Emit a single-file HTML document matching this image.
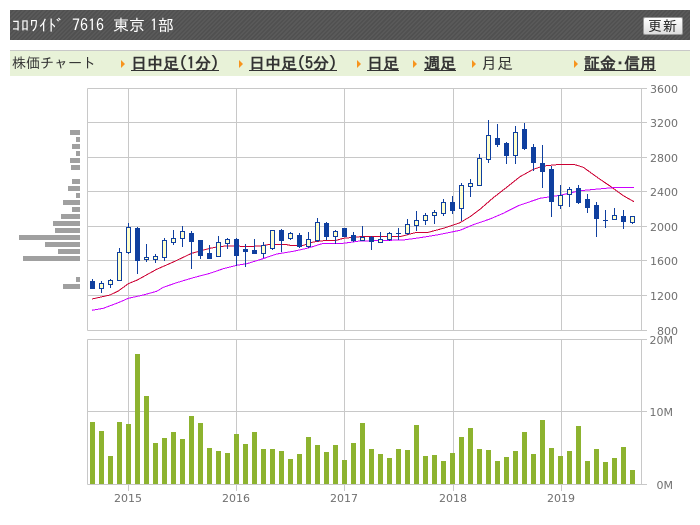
<!DOCTYPE html>
<html lang="ja"><head><meta charset="utf-8"><title>Chart</title>
<style>
html,body{margin:0;padding:0;background:#fff;width:700px;height:525px;overflow:hidden}
#wrap{position:relative;width:700px;height:525px;font-family:"IPAGothic","Liberation Sans","Noto Sans CJK JP",sans-serif}
#head{position:absolute;left:10px;top:10px;width:680px;height:30px;background:repeating-linear-gradient(135deg,#5a5a5a 0,#5a5a5a 1.5px,#505050 1.5px,#505050 3px)}
.t{position:absolute;white-space:pre;line-height:16px}
#head .t{color:#fff;font-size:16px;top:7px}
#btn{position:absolute;left:633px;top:7px;width:38px;height:16px;border:1px solid #999;border-radius:2px;background:linear-gradient(#fff,#ddd);color:#222;font-size:14px;line-height:16px;text-align:center;letter-spacing:1px}
#nav{position:absolute;left:10px;top:50px;width:680px;height:25px;border-top:1px solid #c8c8c8;background:#e8f2d8}
#nav .t{top:4px;color:#333;font-size:16px}
#nav a{color:#333;font-weight:bold;text-decoration:underline}
.ar{position:absolute;top:9px;width:0;height:0;border-left:4px solid #f7941d;border-top:4px solid transparent;border-bottom:4px solid transparent}
svg{position:absolute;left:0;top:0}
svg text{font-family:"DejaVu Sans",sans-serif;font-size:11px;fill:#707070}
</style></head><body><div id="wrap">
<div id="head">
<span class="t" style="left:2px;letter-spacing:1px">ｺﾛﾜｲﾄﾞ</span>
<span class="t" style="left:62px">7616</span>
<span class="t" style="left:103px">東京</span>
<span class="t" style="left:140px">1部</span>
<div id="btn">更新</div>
</div>
<div id="nav">
<span class="t" style="left:2px;font-size:14px">株価チャート</span>
<i class="ar" style="left:111px"></i><span class="t" style="left:121px"><a>日中足(1分)</a></span>
<i class="ar" style="left:229px"></i><span class="t" style="left:239px"><a>日中足(5分)</a></span>
<i class="ar" style="left:347px"></i><span class="t" style="left:357px"><a>日足</a></span>
<i class="ar" style="left:403px"></i><span class="t" style="left:414px"><a>週足</a></span>
<i class="ar" style="left:462px"></i><span class="t" style="left:471px">月足</span>
<i class="ar" style="left:564px"></i><span class="t" style="left:574px"><a>証金･信用</a></span>
</div>
<svg width="700" height="525" viewBox="0 0 700 525">
<g fill="#a0a0a0">
<rect x="70" y="130" width="10" height="5"/><rect x="76" y="137" width="4" height="5"/><rect x="72" y="144" width="8" height="5"/><rect x="76" y="151" width="4" height="5"/><rect x="70" y="158" width="10" height="5"/><rect x="71" y="165" width="9" height="5"/><rect x="72" y="179" width="8" height="5"/><rect x="68" y="186" width="12" height="5"/><rect x="76" y="193" width="4" height="5"/><rect x="63" y="200" width="17" height="5"/><rect x="72" y="207" width="8" height="5"/><rect x="61" y="214" width="19" height="5"/><rect x="53" y="221" width="27" height="5"/><rect x="55" y="228" width="25" height="5"/><rect x="19" y="235" width="61" height="5"/><rect x="45" y="242" width="35" height="5"/><rect x="58" y="249" width="22" height="5"/><rect x="23" y="256" width="57" height="5"/><rect x="76" y="277" width="4" height="5"/><rect x="63" y="284" width="17" height="5"/>
</g>
<path fill="none" stroke="#c8c8c8" stroke-width="1" shape-rendering="crispEdges" d="M87.5 88.5H647M87.5 122.5H647M87.5 157.5H647M87.5 191.5H647M87.5 226.5H647M87.5 260.5H647M87.5 295.5H647M87.5 330.5H647M87.5 88.5V330.5M128.5 88.5V330.5M236.5 88.5V330.5M344.5 88.5V330.5M453.5 88.5V330.5M561.5 88.5V330.5M641.5 88.5V330.5M87.5 339.5H647M87.5 411.5H647M87.5 484.5H647M87.5 339.5V484.5M128.5 339.5V491M236.5 339.5V491M344.5 339.5V491M453.5 339.5V491M561.5 339.5V491M641.5 339.5V484.5"/>
<polyline fill="none" stroke="#cc0033" stroke-width="1" shape-rendering="crispEdges" points="92,299 110,295 118.3,291 128.3,283.7 137.3,280 156.7,269.3 173.3,262 191.7,253.3 210,248.3 218.3,246.7 226.7,246 236.7,246 245.3,246.7 260,246 270,244.3 285,244.3 290,245.3 303.3,245.3 313.3,242 323.3,240.7 335,240.7 343.3,238.3 360,236.7 400,236.7 410,234 416.7,232.3 428.3,232.3 443.3,228.3 460,222.7 470,216.7 480,209.3 493.3,197.7 506.7,187.3 520,176.7 533.3,169.3 543.3,166 556.7,164.7 575,164.7 583.3,167.3 600,179.3 610,186 623.3,195.7 634,201.7"/>
<polyline fill="none" stroke="#cc00ff" stroke-width="1" shape-rendering="crispEdges" points="92,310.3 103.3,308.3 118.3,302.7 128.3,298.3 143.3,295 156.7,291.3 163.3,287.3 176.7,282.7 193.3,277.7 210,273.3 223.3,268.7 236.7,265.3 246.7,263.7 260,259.7 276.7,254 293.3,251.3 308.3,248 323.3,243.3 343.3,243.3 360,241 403.3,240 420,237.7 436.7,235 460,230.3 473.3,224.7 490,219 503.3,213.3 518.3,205.7 540,198.3 560,195.3 580,190.7 601.7,188.7 616.7,187.3 634,187.3"/>
<path fill="none" stroke="#0f3f9f" stroke-width="1" shape-rendering="crispEdges" d="M92.5 279V289M101.5 281V293M110.5 279V288M119.5 248V281M128.5 223V254M137.5 227V274M146.5 244V262M155.5 254V263M164.5 238V261M173.5 230V245M182.5 226V247M191.5 231V269M200.5 240V259M209.5 245V259M218.5 236V257M227.5 238V249M236.5 238V266M245.5 244V267M254.5 239V254M263.5 242V258M272.5 230V250M281.5 229V252M290.5 232V240M299.5 233V248M308.5 232V248M317.5 218V242M326.5 222V240M335.5 230V244M344.5 228V237M353.5 232V242M362.5 226V241M371.5 236V250M380.5 232V243M389.5 232V241M398.5 228V240M396 233.5H401M407.5 219V235M416.5 211V231M425.5 213V225M434.5 210V224M443.5 199V216M452.5 196V214M461.5 183V221M470.5 179V197M479.5 154V186M488.5 120V163M497.5 124V147M506.5 142V164M515.5 126V164M524.5 123V150M533.5 144V171M542.5 145V188M551.5 166V217M560.5 185V209M569.5 187V207M578.5 185V204M587.5 194V213M596.5 202V237M605.5 210V228M603 220.5H608M614.5 208V220M623.5 210V229M632.5 216V224"/>
<path fill="#ffffcc" stroke="#0f3f9f" stroke-width="1" shape-rendering="crispEdges" d="M99.5 283.5h4v5h-4zM108.5 280.5h4v4h-4zM117.5 252.5h4v28h-4zM126.5 227.5h4v25h-4zM144.5 257.5h4v2h-4zM153.5 256.5h4v3h-4zM162.5 240.5h4v17h-4zM171.5 238.5h4v4h-4zM180.5 231.5h4v7h-4zM216.5 242.5h4v14h-4zM225.5 239.5h4v4h-4zM261.5 245.5h4v8h-4zM270.5 230.5h4v18h-4zM288.5 233.5h4v5h-4zM306.5 239.5h4v7h-4zM315.5 222.5h4v18h-4zM333.5 231.5h4v5h-4zM360.5 237.5h4v3h-4zM378.5 239.5h4v3h-4zM387.5 233.5h4v6h-4zM405.5 224.5h4v9h-4zM414.5 220.5h4v5h-4zM423.5 215.5h4v5h-4zM432.5 212.5h4v3h-4zM441.5 202.5h4v11h-4zM459.5 185.5h4v23h-4zM468.5 183.5h4v3h-4zM477.5 158.5h4v27h-4zM486.5 135.5h4v24h-4zM513.5 132.5h4v23h-4zM558.5 195.5h4v10h-4zM567.5 189.5h4v5h-4zM612.5 215.5h4v4h-4zM630.5 216.5h4v6h-4z"/>
<path fill="#0f3f9f" shape-rendering="crispEdges" d="M90 281h5v8h-5zM135 228h5v33h-5zM189 233h5v9h-5zM198 240h5v16h-5zM207 253h5v6h-5zM234 239h5v17h-5zM243 249h5v3h-5zM252 250h5v4h-5zM279 230h5v11h-5zM297 235h5v12h-5zM324 223h5v14h-5zM342 228h5v9h-5zM351 235h5v6h-5zM369 237h5v5h-5zM450 202h5v9h-5zM495 138h5v7h-5zM504 143h5v13h-5zM522 129h5v20h-5zM531 147h5v16h-5zM540 163h5v9h-5zM549 169h5v33h-5zM576 188h5v15h-5zM585 199h5v9h-5zM594 205h5v14h-5zM621 216h5v6h-5z"/>
<path fill="#8db32f" shape-rendering="crispEdges" d="M90 422h5V484h-5zM99 431h5V484h-5zM108 456h5V484h-5zM117 422h5V484h-5zM126 424h5V484h-5zM135 354h5V484h-5zM144 396h5V484h-5zM153 443h5V484h-5zM162 438h5V484h-5zM171 432h5V484h-5zM180 439h5V484h-5zM189 416h5V484h-5zM198 423h5V484h-5zM207 448h5V484h-5zM216 451h5V484h-5zM225 453h5V484h-5zM234 434h5V484h-5zM243 444h5V484h-5zM252 432h5V484h-5zM261 449h5V484h-5zM270 449h5V484h-5zM279 451h5V484h-5zM288 459h5V484h-5zM297 454h5V484h-5zM306 437h5V484h-5zM315 445h5V484h-5zM324 452h5V484h-5zM333 445h5V484h-5zM342 460h5V484h-5zM351 443h5V484h-5zM360 423h5V484h-5zM369 449h5V484h-5zM378 454h5V484h-5zM387 458h5V484h-5zM396 449h5V484h-5zM405 450h5V484h-5zM414 425h5V484h-5zM423 456h5V484h-5zM432 455h5V484h-5zM441 461h5V484h-5zM450 453h5V484h-5zM459 437h5V484h-5zM468 428h5V484h-5zM477 449h5V484h-5zM486 450h5V484h-5zM495 461h5V484h-5zM504 457h5V484h-5zM513 451h5V484h-5zM522 432h5V484h-5zM531 454h5V484h-5zM540 420h5V484h-5zM549 448h5V484h-5zM558 456h5V484h-5zM567 451h5V484h-5zM576 426h5V484h-5zM585 461h5V484h-5zM594 449h5V484h-5zM603 462h5V484h-5zM612 458h5V484h-5zM621 447h5V484h-5zM630 470h5V484h-5z"/>
<g text-anchor="end">
<text x="678" y="93">3600</text><text x="678" y="127">3200</text><text x="678" y="162">2800</text><text x="678" y="196">2400</text><text x="678" y="231">2000</text><text x="678" y="265">1600</text><text x="678" y="300">1200</text><text x="678" y="335">800</text>
<text x="673" y="344">20M</text><text x="673" y="416">10M</text><text x="673" y="489">0M</text>
</g>
<g text-anchor="middle">
<text x="128" y="502">2015</text><text x="236" y="502">2016</text><text x="344" y="502">2017</text><text x="453" y="502">2018</text><text x="561" y="502">2019</text>
</g>
</svg>
</div></body></html>
